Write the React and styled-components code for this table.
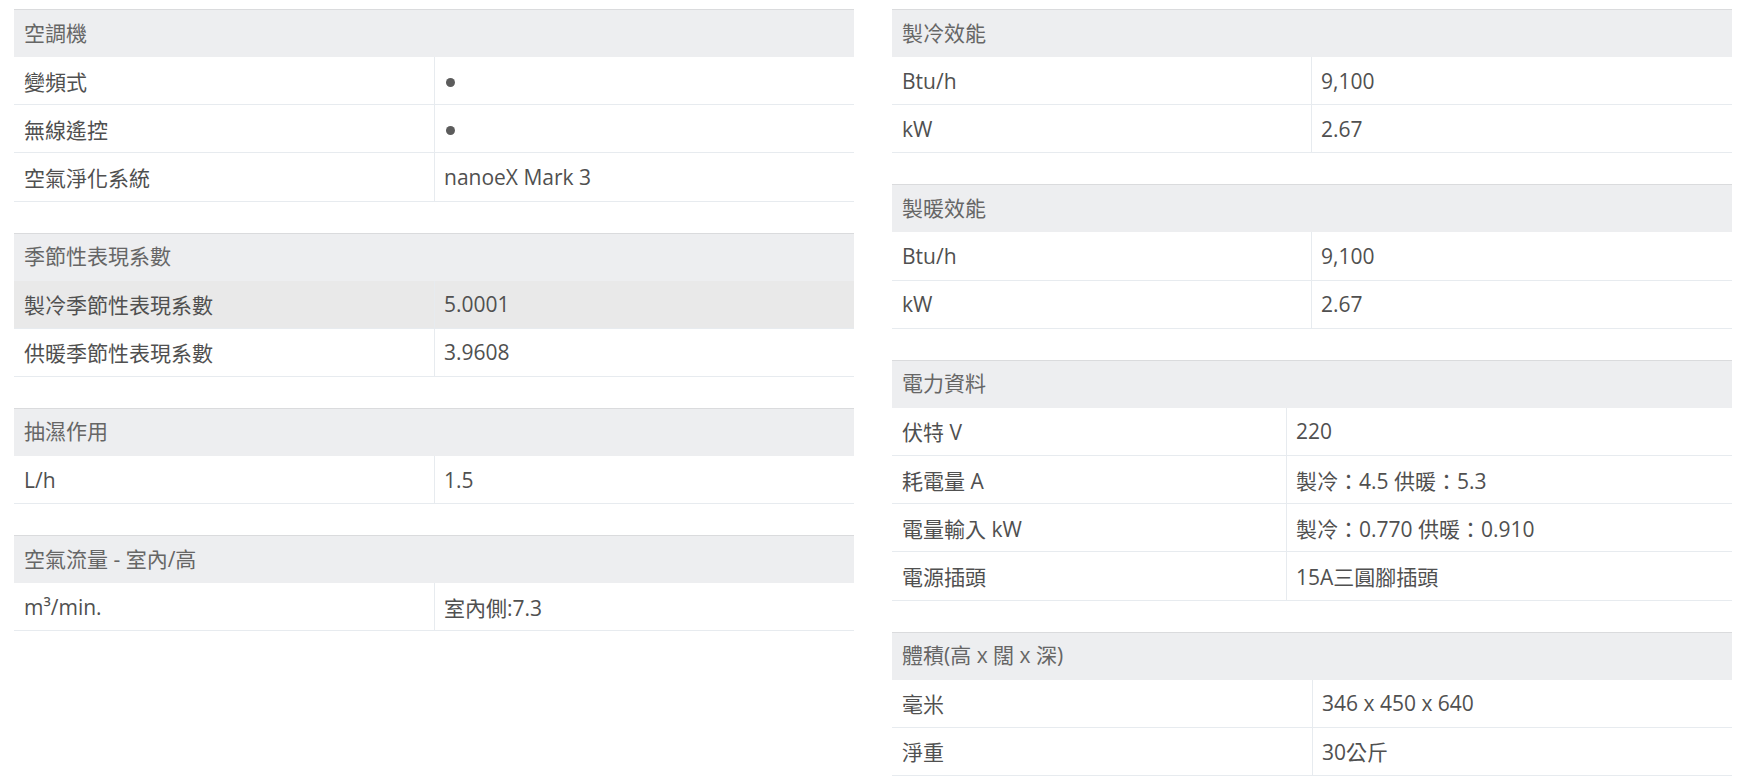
import React from 'react'
import styled, { createGlobalStyle } from 'styled-components'

const GlobalStyle = createGlobalStyle`
  body {
    margin: 0;
    background: #fff;
    font-family: "Open Sans", "Noto Sans CJK TC", sans-serif;
    color: #555;
  }
`

const Page = styled.div`
  display: grid;
  grid-template-columns: 840px 840px;
  column-gap: 38px;
  align-items: start;
  padding: 9px 14px 0;
`

const Column = styled.div`
  display: flex;
  flex-direction: column;
  gap: 31px;
`

const Section = styled.section`
  width: 100%;
`

const Head = styled.div`
  display: flex;
  align-items: center;
  box-sizing: border-box;
  height: 48px;
  padding: 0 10px 4px;
  background: #edeef0;
  border-top: 1px solid #dadbdd;
  font-size: 21px;
  color: #666;
`

const Row = styled.div`
  display: grid;
  grid-template-columns: ${(p) => p.$split || '420px'} 1fr;
  border-bottom: 1px solid #e7ebef;
  background: ${(p) => (p.$active ? '#e9e9e9' : '#fff')};
`

const Cell = styled.div`
  display: flex;
  align-items: center;
  height: 47.2px;
  padding: 0 10px;
  font-size: 21px;
  color: #505050;
  white-space: nowrap;
`

const Value = styled(Cell)`
  border-left: 1px solid #e7ebef;
  padding-left: 9px;
`

const Dot = styled.span`
  display: inline-block;
  width: 9px;
  height: 9px;
  margin: 3px 0 0 2px;
  border-radius: 50%;
  background: #5c5c5c;
`

const dot = <Dot aria-label="●" />

const left = [
  {
    title: '空調機',
    rows: [
      ['變頻式', dot],
      ['無線遙控', dot],
      ['空氣淨化系統', 'nanoeX Mark 3'],
    ],
  },
  {
    title: '季節性表現系數',
    rows: [
      ['製冷季節性表現系數', '5.0001', true],
      ['供暖季節性表現系數', '3.9608'],
    ],
  },
  { title: '抽濕作用', rows: [['L/h', '1.5']] },
  { title: '空氣流量 - 室內/高', rows: [['m³/min.', '室內側:7.3']] },
]

const right = [
  {
    title: '製冷效能',
    split: '419px',
    rows: [
      ['Btu/h', '9,100'],
      ['kW', '2.67'],
    ],
  },
  {
    title: '製暖效能',
    split: '419px',
    rows: [
      ['Btu/h', '9,100'],
      ['kW', '2.67'],
    ],
  },
  {
    title: '電力資料',
    split: '394px',
    rows: [
      ['伏特 V', '220'],
      ['耗電量 A', '製冷：4.5 供暖：5.3'],
      ['電量輸入 kW', '製冷：0.770 供暖：0.910'],
      ['電源插頭', '15A三圓腳插頭'],
    ],
  },
  {
    title: '體積(高 x 闊 x 深)',
    split: '420px',
    rows: [
      ['毫米', '346 x 450 x 640'],
      ['淨重', '30公斤'],
    ],
  },
]

const SpecTable = ({ title, rows, split }) => (
  <Section>
    <Head>{title}</Head>
    {rows.map(([label, value, active], i) => (
      <Row key={i} $split={split} $active={active}>
        <Cell>{label}</Cell>
        <Value>{value}</Value>
      </Row>
    ))}
  </Section>
)

const App = () => (
  <>
    <GlobalStyle />
    <Page>
      <Column>
        {left.map((s) => (
          <SpecTable key={s.title} {...s} />
        ))}
      </Column>
      <Column>
        {right.map((s) => (
          <SpecTable key={s.title} {...s} />
        ))}
      </Column>
    </Page>
  </>
)

export default App
